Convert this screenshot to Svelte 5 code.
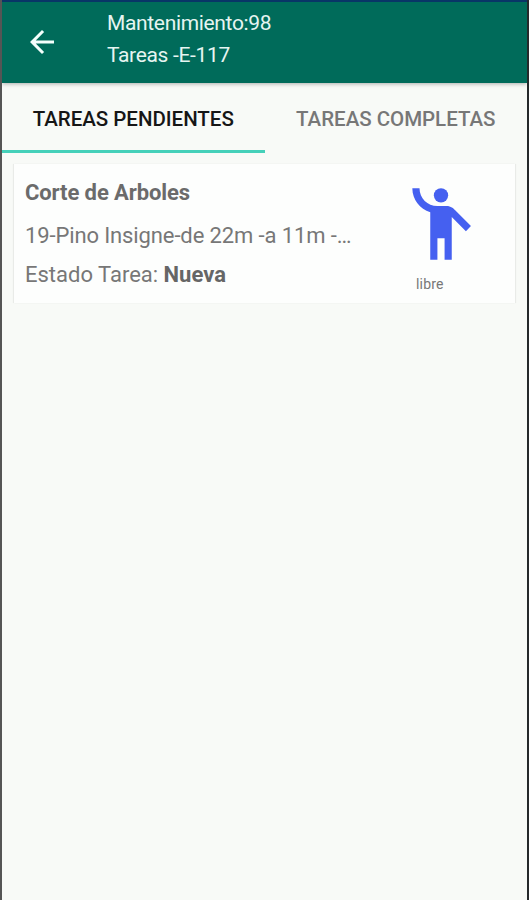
<script>
  let activeTab = $state(0);

  const tabs = ['Tareas pendientes', 'Tareas completas'];

  const pendientes = [
    {
      titulo: 'Corte de Arboles',
      detalle: '19-Pino Insigne-de 22m -a 11m -…',
      estado: 'Nueva',
      asignacion: 'libre'
    }
  ];

  let tareas = $derived(activeTab === 0 ? pendientes : []);
</script>

<div class="screen">
  <header class="toolbar">
    <button class="back" aria-label="Volver">
      <svg viewBox="0 0 24 24" width="36" height="36">
        <path d="M20 11H7.83l5.59-5.59L12 4l-8 8 8 8 1.41-1.41L7.83 13H20v-2z" />
      </svg>
    </button>
    <div class="heading">
      <span class="mantenimiento">Mantenimiento:98</span>
      <span class="equipo">Tareas -E-117</span>
    </div>
  </header>

  <nav class="tabs">
    {#each tabs as tab, i}
      <button class="tab" class:active={activeTab === i} onclick={() => (activeTab = i)}>
        {tab}
      </button>
    {/each}
  </nav>

  <main>
    {#each tareas as tarea}
      <article class="card">
        <div class="info">
          <h2>{tarea.titulo}</h2>
          <p class="detalle">{tarea.detalle}</p>
          <p class="estado">Estado Tarea: <b>{tarea.estado}</b></p>
        </div>
        <div class="asignacion">
          <svg viewBox="0 0 24 24" width="86" height="86">
            <circle cx="12" cy="4" r="2" />
            <path
              d="M15.89 8.11C15.5 7.72 14.83 7 13.53 7h-2.54C8.24 6.99 6 4.75 6 2H4c0 3.16 2.11 5.84 5 6.71V22h2v-6h2v6h2V10.05L18.95 14l1.41-1.41-4.47-4.48z"
            />
          </svg>
          <span>{tarea.asignacion}</span>
        </div>
      </article>
    {/each}
  </main>
</div>

<style>
  .screen {
    box-sizing: border-box;
    height: 900px;
    overflow: hidden;
    display: flex;
    flex-direction: column;
    background: #f8faf7;
    border-left: 2px solid #555;
    border-right: 2px solid #25292b;
    font-family: Roboto, sans-serif;
    color: #777;
  }

  button {
    padding: 0;
    border: 0;
    background: none;
    font: inherit;
    color: inherit;
    cursor: pointer;
  }

  .toolbar {
    box-sizing: border-box;
    flex: none;
    height: 83px;
    display: flex;
    border-top: 2px solid #083567;
    background: #006b5a;
    color: #e6f5f1;
    box-shadow: 0 1px 4px rgba(0, 0, 0, 0.3);
  }

  .back {
    width: 80px;
    height: 80px;
  }

  .back svg {
    display: block;
    margin: 0 auto;
    fill: #f4fffc;
  }

  .heading {
    display: flex;
    flex-direction: column;
    padding: 5px 0 0 25px;
    font-size: 21px;
    letter-spacing: -0.34px;
    line-height: 32px;
  }

  .tabs {
    flex: none;
    height: 70px;
    display: flex;
  }

  .tab {
    box-sizing: border-box;
    flex: 1;
    padding-top: 5px;
    border-bottom: 3px solid transparent;
    font-size: 20.5px;
    font-weight: 500;
    letter-spacing: -0.02px;
    text-transform: uppercase;
    white-space: nowrap;
  }

  .tab.active {
    color: #161616;
    border-bottom-color: #45d0b9;
  }

  main {
    padding: 11px 12px 0;
  }

  .card {
    box-sizing: border-box;
    height: 139px;
    display: flex;
    justify-content: space-between;
    background: #fdfefd;
    box-shadow:
      -1px 0 1px rgba(0, 0, 0, 0.06),
      1px 0 1px rgba(0, 0, 0, 0.06);
  }

  .info {
    padding: 9px 0 0 11px;
    white-space: nowrap;
  }

  h2,
  p {
    margin: 0;
    font-size: 22px;
    line-height: 40px;
  }

  h2 {
    font-weight: 700;
    letter-spacing: -0.1px;
    color: #6b6b6b;
  }

  .detalle {
    line-height: 46px;
    letter-spacing: -0.12px;
  }

  .estado {
    line-height: 32px;
  }

  b {
    color: #666;
  }

  .asignacion {
    width: 117px;
    padding-top: 17px;
    display: flex;
    flex-direction: column;
  }

  .asignacion svg {
    fill: #4560f0;
  }

  .asignacion span {
    margin-left: 18px;
    font-size: 14px;
    letter-spacing: 0.2px;
    line-height: 34px;
  }
</style>
